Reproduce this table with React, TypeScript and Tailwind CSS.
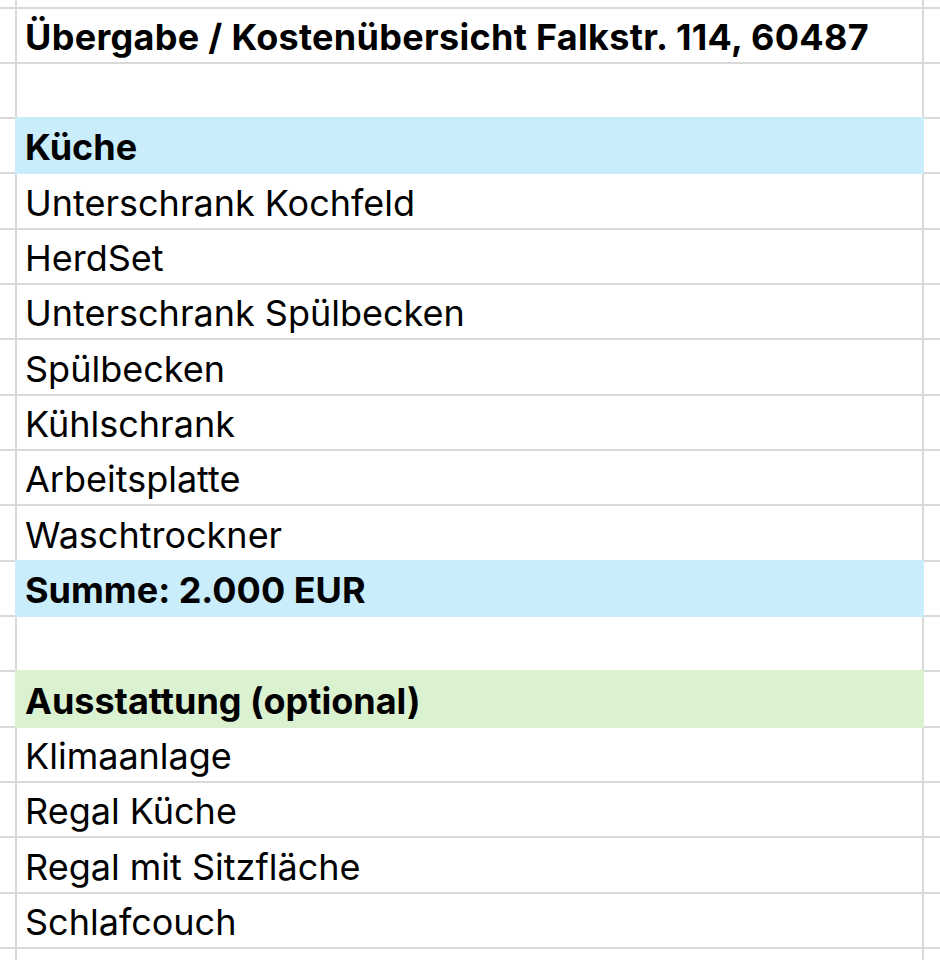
import React from "react";

type Fill = "blue" | "green" | undefined;

const rows: { text: string; bold?: boolean; fill?: Fill; title?: boolean }[] = [
  { text: "Übergabe / Kostenübersicht Falkstr. 114, 60487", bold: true, title: true },
  { text: "" },
  { text: "Küche", bold: true, fill: "blue" },
  { text: "Unterschrank Kochfeld" },
  { text: "HerdSet" },
  { text: "Unterschrank Spülbecken" },
  { text: "Spülbecken" },
  { text: "Kühlschrank" },
  { text: "Arbeitsplatte" },
  { text: "Waschtrockner" },
  { text: "Summe: 2.000 EUR", bold: true, fill: "blue" },
  { text: "" },
  { text: "Ausstattung (optional)", bold: true, fill: "green" },
  { text: "Klimaanlage" },
  { text: "Regal Küche" },
  { text: "Regal mit Sitzfläche" },
  { text: "Schlafcouch" },
];

function midClass(fill: Fill, prevFill: Fill) {
  if (fill === "blue") return "bg-[#caedfb] border-[#caedfb]";
  if (fill === "green") return "bg-[#daf2d0] border-[#daf2d0]";
  if (prevFill === "blue") return "border-[#caedfb]";
  if (prevFill === "green") return "border-[#daf2d0]";
  return "border-[#d9d9d9]";
}

function Row({
  text,
  bold,
  fill,
  prevFill,
  title,
}: {
  text: string;
  bold?: boolean;
  fill?: Fill;
  prevFill?: Fill;
  title?: boolean;
}) {
  return (
    <div className="flex h-[55.32px] shrink-0">
      <div className="w-[15px] shrink-0 border-t-2 border-[#d9d9d9]" />
      <div className={"flex w-[909px] shrink-0 border-t-2 " + midClass(fill, prevFill)}>
        <div className={"w-[2px] shrink-0 " + (fill ? "" : "bg-[#d9d9d9]")} />
        <div
          className={
            "flex flex-1 items-end pb-[7px] pl-[8px] leading-none whitespace-nowrap text-[36px] text-black " +
            (bold ? "font-bold " : "font-normal ") +
            (title ? "tracking-[0.3px]" : "")
          }
        >
          {text}
        </div>
        <div className={"w-[2px] shrink-0 " + (fill ? "" : "bg-[#d9d9d9]")} />
      </div>
      <div className="flex-1 border-t-2 border-[#d9d9d9]" />
    </div>
  );
}

function EdgeRow({ top, h }: { top?: boolean; h: string }) {
  return (
    <div className={"flex shrink-0 " + h}>
      <div className={"w-[15px] shrink-0 " + (top ? "border-t-2 border-[#d9d9d9]" : "")} />
      <div className={"flex w-[909px] shrink-0 " + (top ? "border-t-2 border-[#d9d9d9]" : "")}>
        <div className="w-[2px] shrink-0 bg-[#d9d9d9]" />
        <div className="flex-1" />
        <div className="w-[2px] shrink-0 bg-[#d9d9d9]" />
      </div>
      <div className={"flex-1 " + (top ? "border-t-2 border-[#d9d9d9]" : "")} />
    </div>
  );
}

export default function App() {
  return (
    <div className="flex h-[960px] w-[940px] flex-col overflow-hidden bg-white font-['Inter',sans-serif]">
      <EdgeRow h="h-[6.5px]" />
      {rows.map((r, i) => (
        <Row
          key={i}
          text={r.text}
          bold={r.bold}
          fill={r.fill}
          title={r.title}
          prevFill={i > 0 ? rows[i - 1].fill : undefined}
        />
      ))}
      <EdgeRow top h="flex-1" />
    </div>
  );
}
